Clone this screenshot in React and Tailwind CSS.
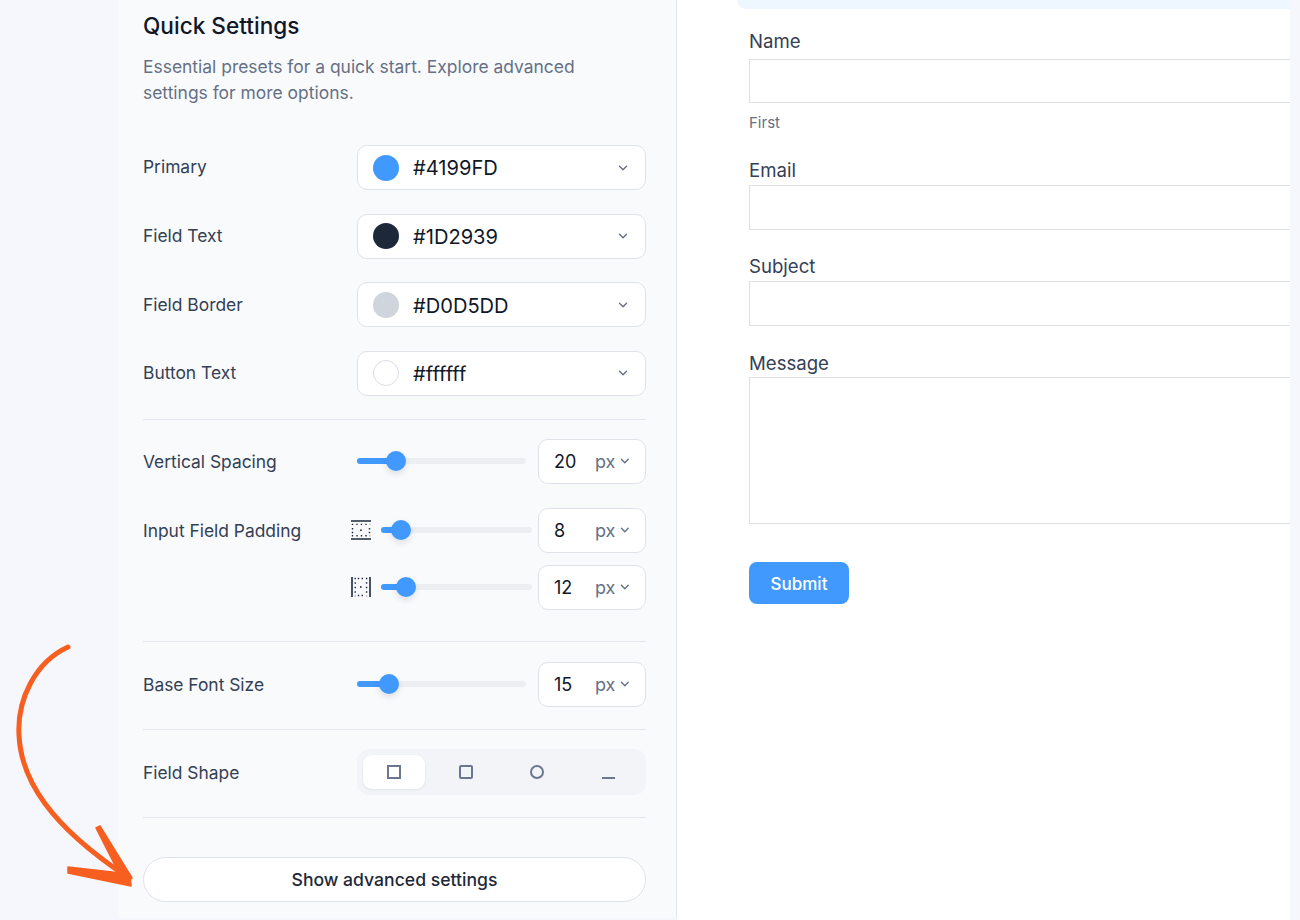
import { ChevronDown } from 'lucide-react';

const colorRows = [
  { label: 'Primary', value: '#4199FD', swatch: 'bg-[#4199fd]' },
  { label: 'Field Text', value: '#1D2939', swatch: 'bg-[#1d2939]' },
  { label: 'Field Border', value: '#D0D5DD', swatch: 'bg-[#d0d5dd]' },
  { label: 'Button Text', value: '#ffffff', swatch: 'bg-white border border-[#d9dde5]' },
];

function ColorSelect({ value, swatch }) {
  return (
    <div className="flex h-[45px] w-[289px] items-center rounded-[10px] border border-[#dfe2e9] bg-white pl-[15px] pr-[15px]">
      <span className={`h-[26px] w-[26px] rounded-full ${swatch}`} />
      <span className="ml-[14px] flex-1 pt-[2px] text-[20.1px] text-[#101828]">{value}</span>
      <ChevronDown size={14} strokeWidth={2.4} className="text-[#667085]" />
    </div>
  );
}

function Slider({ width, fill, thumb }) {
  return (
    <div className={`relative h-[6px] rounded-full bg-[#eceef2] ${width}`}>
      <div className={`h-[6px] rounded-full bg-[#4199fd] ${fill}`} />
      <div className={`absolute top-[-7px] h-[20px] w-[20px] -translate-x-1/2 rounded-full bg-[#4199fd] shadow-[0_3px_6px_rgba(16,24,40,0.12)] ${thumb}`} />
    </div>
  );
}

function NumberBox({ value }) {
  return (
    <div className="flex h-[45px] w-[108px] items-center rounded-[10px] border border-[#dfe2e9] bg-white pl-[15px] pr-[13px] text-[18px]">
      <span className="w-[42px] text-[#101828]">{value}</span>
      <span className="text-[#667085]">px</span>
      <ChevronDown size={14} strokeWidth={2.4} className="ml-[3px] text-[#667085]" />
    </div>
  );
}

function PaddingIcon({ vertical }) {
  return (
    <svg width="20" height="20" viewBox="0 0 20 20" className={`text-[#1d2939] ${vertical ? 'rotate-90' : ''}`}>
      <path d="M0 1h20M0 19h20" stroke="currentColor" strokeWidth="1.6" />
      <path d="M0.8 4.4h18.4M0.8 15.8h18.4" stroke="currentColor" strokeWidth="1.4" strokeDasharray="1.4 3.1" fill="none" />
      <path d="M1.5 8v1.4M1.5 11.8v1.4M18.5 8v1.4M18.5 11.8v1.4" stroke="currentColor" strokeWidth="1.4" fill="none" />
      <rect x="9.2" y="9.4" width="1.6" height="1.6" fill="currentColor" />
    </svg>
  );
}

function Field({ label, children, className }) {
  return (
    <div className={className}>
      <label className="block text-[18.6px] leading-[22px] text-[#344054]">{label}</label>
      {children}
    </div>
  );
}

const inputClass = 'block w-[545px] border border-[#dcdfe6] bg-white';
const labelClass = 'pt-[2px] text-[17.4px] text-[#344054]';

export default function App() {
  return (
    <div className="relative flex h-[920px] w-[1300px] overflow-hidden bg-[#f5f7fc] font-['Inter',sans-serif]">
      <div className="w-[118px]" />

      <aside className="h-[918px] w-[559px] border-r border-[#e3e6ee] bg-[#f9fafc] pl-[25px] pr-[30px]">
        <h2 className="mt-[12px] text-[22.6px] font-medium leading-[28px] text-[#101828]">Quick Settings</h2>
        <p className="mt-[14px] w-[470px] text-[17.45px] leading-[26px] text-[#667085]">
          Essential presets for a quick start. Explore advanced settings for more options.
        </p>

        <div className="mt-[39px] flex flex-col gap-[23.67px]">
          {colorRows.map((row) => (
            <div key={row.label} className="flex items-center justify-between">
              <span className="text-[17.4px] text-[#344054]">{row.label}</span>
              <ColorSelect value={row.value} swatch={row.swatch} />
            </div>
          ))}
        </div>

        <div className="mt-[23px] border-t border-[#e3e6ee] pt-[19px]">
          <div className="flex items-center">
            <span className={`w-[214px] ${labelClass}`}>Vertical Spacing</span>
            <Slider width="w-[169px]" fill="w-[39px]" thumb="left-[39px]" />
            <div className="ml-[12px]"><NumberBox value="20" /></div>
          </div>
          <div className="mt-[24px] flex items-center">
            <span className={`w-[208px] ${labelClass}`}>Input Field Padding</span>
            <PaddingIcon />
            <div className="ml-[10px]"><Slider width="w-[151px]" fill="w-[20px]" thumb="left-[20px]" /></div>
            <div className="ml-[6px]"><NumberBox value="8" /></div>
          </div>
          <div className="mt-[12px] flex items-center">
            <span className="w-[208px]" />
            <PaddingIcon vertical />
            <div className="ml-[10px]"><Slider width="w-[151px]" fill="w-[25px]" thumb="left-[25px]" /></div>
            <div className="ml-[6px]"><NumberBox value="12" /></div>
          </div>
        </div>

        <div className="mt-[31px] border-t border-[#e3e6ee] pt-[20px]">
          <div className="flex items-center">
            <span className={`w-[214px] ${labelClass}`}>Base Font Size</span>
            <Slider width="w-[169px]" fill="w-[32px]" thumb="left-[32px]" />
            <div className="ml-[12px]"><NumberBox value="15" /></div>
          </div>
        </div>

        <div className="mt-[22px] flex items-center justify-between border-t border-[#e3e6ee] pt-[19px]">
          <span className={labelClass}>Field Shape</span>
          <div className="flex h-[46px] w-[289px] items-center justify-between rounded-[12px] bg-[#f2f4f8] px-[6px]">
            <div className="flex h-[34px] w-[62px] items-center justify-center rounded-[9px] bg-white shadow-[0_1px_3px_rgba(16,24,40,0.08)]">
              <span className="h-[14px] w-[14px] border-2 border-[#6b7690]" />
            </div>
            <div className="flex h-[34px] w-[62px] items-center justify-center">
              <span className="h-[14px] w-[14px] rounded-[2px] border-2 border-[#6b7690]" />
            </div>
            <div className="flex h-[34px] w-[62px] items-center justify-center">
              <span className="h-[14px] w-[14px] rounded-full border-2 border-[#6b7690]" />
            </div>
            <div className="flex h-[34px] w-[62px] items-end justify-center pb-[10px]">
              <span className="h-[2px] w-[13px] bg-[#6b7690]" />
            </div>
          </div>
        </div>

        <div className="mt-[22px] border-t border-[#e3e6ee] pt-[39px]">
          <button className="h-[45px] w-full rounded-full border border-[#dfe2e9] bg-white pt-[2px] text-[17.6px] font-medium text-[#1d2939]">
            Show advanced settings
          </button>
        </div>
      </aside>

      <main className="h-full w-[613px] overflow-hidden bg-white">
        <div className="ml-[60px] h-[9px] rounded-bl-[10px] bg-[#eef6ff]" />
        <div className="pl-[72px]">
          <Field label="Name" className="mt-[21px]">
            <input className={`${inputClass} mt-[7px] h-[44px]`} />
            <p className="mt-[11px] text-[15px] leading-[18px] text-[#667085]">First</p>
          </Field>
          <Field label="Email" className="mt-[27px]">
            <input className={`${inputClass} mt-[4px] h-[45px]`} />
          </Field>
          <Field label="Subject" className="mt-[25px]">
            <input className={`${inputClass} mt-[4px] h-[45px]`} />
          </Field>
          <Field label="Message" className="mt-[26px]">
            <textarea className={`${inputClass} mt-[3px] h-[147px] resize-none`} />
          </Field>
          <button className="mt-[38px] h-[42px] w-[100px] rounded-[8px] bg-[#4199fd] pt-[3px] text-[17px] font-medium text-white">
            Submit
          </button>
        </div>
      </main>

      {/* hand drawn arrow pointing at the button */}
      <svg width="140" height="250" viewBox="0 0 140 250" className="absolute left-0 top-[640px]">
        <path
          d="M68 7C35 22 17 60 19 95C21 140 50 185 126 236"
          fill="none"
          stroke="#f75f21"
          strokeWidth="5"
          strokeLinecap="round"
        />
        <path d="M96 188L100 186L132 238L124 243Z M68 227L130 234L131 246L68 233Z" fill="#f75f21" stroke="#f75f21" strokeWidth="1.5" strokeLinejoin="round" />
      </svg>
    </div>
  );
}
